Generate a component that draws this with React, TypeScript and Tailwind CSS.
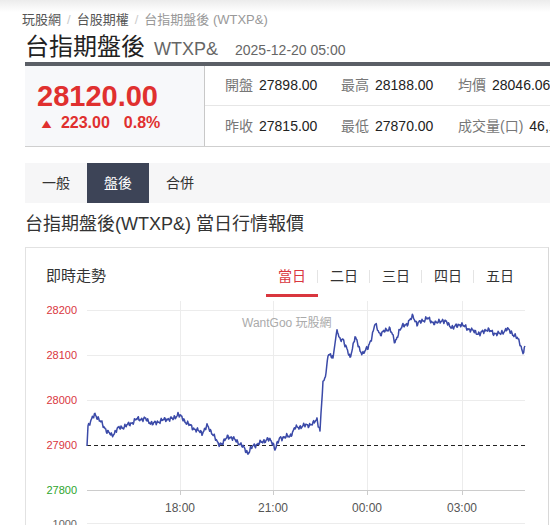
import React from "react";

const KEY: [number, number][] = [
  [87, 445], [88, 425], [91, 420], [95, 413], [100, 420], [107, 430], [112, 435], [117, 428],
  [123, 426], [130, 423], [137, 418], [145, 418], [153, 423], [160, 420], [167, 418], [173, 418],
  [178, 413], [187, 422], [193, 427], [202, 432], [207, 425], [213, 433], [218, 443], [223, 442],
  [228, 435], [237, 440], [243, 446], [248, 452], [253, 445], [260, 442], [268, 438], [273, 442],
  [275, 448], [280, 437], [290, 435], [295, 427], [303, 425], [313, 423], [317, 418], [320, 430],
  [321, 412], [323, 383], [326, 372], [328, 353], [333, 357], [337, 328], [340, 340], [343, 338],
  [347, 348], [350, 358], [355, 335], [360, 350], [363, 352], [368, 347], [372, 335], [375, 323],
  [380, 333], [385, 330], [390, 327], [395, 342], [399, 330], [403, 325], [408, 322], [413, 315],
  [417, 323], [422, 320], [427, 317], [432, 321], [437, 322], [442, 319], [447, 322], [453, 327],
  [460, 323], [467, 327], [473, 330], [480, 333], [487, 328], [493, 332], [500, 333], [507, 328],
  [512, 332], [517, 337], [520, 342], [523, 352], [525, 345],
];

function buildPath(): string {
  const pts: string[] = [];
  for (let i = 0; i < KEY.length - 1; i++) {
    const [x0, y0] = KEY[i];
    const [x1, y1] = KEY[i + 1];
    const steps = Math.max(1, Math.round((x1 - x0) * 1.5));
    for (let s = 0; s < steps; s++) {
      const t = s / steps;
      const x = x0 + (x1 - x0) * t;
      let y = y0 + (y1 - y0) * t;
      const steep = Math.abs(y1 - y0) / Math.max(1, x1 - x0) > 6;
      if (!steep && x > 88) {
        y += Math.sin(x * 1.9) * 1.3 + Math.sin(x * 3.3 + 1) * 1.0 + Math.sin(x * 0.71 + 2) * 0.9;
      }
      pts.push(`${x.toFixed(2)},${y.toFixed(2)}`);
    }
  }
  const last = KEY[KEY.length - 1];
  pts.push(`${last[0]},${last[1]}`);
  return "M" + pts.join(" L");
}

const FONT = { fontFamily: '"Liberation Sans", "Noto Sans CJK TC", Arial, sans-serif' };

export default function App() {
  const path = buildPath();
  const stats = [
    [["開盤", "27898.00"], ["最高", "28188.00"], ["均價", "28046.06"]],
    [["昨收", "27815.00"], ["最低", "27870.00"], ["成交量(口)", "46,128"]],
  ];
  const tabs = ["當日", "二日", "三日", "四日", "五日"];
  return (
    <div
      className="w-[550px] h-[525px] overflow-hidden bg-[linear-gradient(to_bottom,#ececec_0px,#ffffff_12px)] text-[#333]"
      style={FONT}
    >
      <div className="w-[700px] pl-[22px]">
        {/* breadcrumb */}
        <div className="h-[32px] pt-[7px] text-[13px] leading-[18px] flex items-center gap-[6px]">
          <span className="text-[#555]">玩股網</span>
          <span className="text-[#ccc]">/</span>
          <span className="text-[#555]">台股期權</span>
          <span className="text-[#ccc]">/</span>
          <span className="text-[#999]">台指期盤後 (WTXP&amp;)</span>
        </div>
        {/* title */}
        <div className="pl-[3px] h-[30px] flex items-end gap-[9px]">
          <span className="text-[24px] leading-[30px] text-[#222]">台指期盤後</span>
          <span className="text-[18px] leading-[26px] text-[#666]">WTXP&amp;</span>
          <span className="text-[14px] leading-[24px] text-[#666] ml-[8px]">2025-12-20 05:00</span>
        </div>
      </div>
      <div className="w-[700px] pl-[25px] mt-[0px]">
        <div className="mt-[0px] border-t-[4px] border-[#5b5f66] flex border-b border-b-[#cfcfcf]">
          <div className="w-[180px] h-[80px] bg-[#f7f8fa] border-r border-[#c8c8c8] pl-[12px] pt-[14px]">
            <div className="text-[29px] leading-[32px] font-bold text-[#e0302f]">28120.00</div>
            <div className="flex items-center text-[16px] leading-[20px] font-bold text-[#e0302f] mt-[1px]">
              <span className="text-[13px] leading-[13px] ml-[3px] mr-[8px] scale-x-125">▲</span>
              <span>223.00</span>
              <span className="ml-[14px]">0.8%</span>
            </div>
          </div>
          <div className="flex flex-col">
            {stats.map((row, ri) => (
              <div
                key={ri}
                className={`flex h-[40px] items-center ${ri === 0 ? "border-b border-[#e6e6e6]" : ""}`}
              >
                {row.map(([k, v], ci) => (
                  <div key={ci} className={`flex items-center gap-[6px] text-[14px] ${ci === 0 ? "w-[136px] pl-[20px]" : ci === 1 ? "w-[117px]" : "w-[200px]"}`}>
                    <span className="text-[#777]">{k}</span>
                    <span className="text-[#222]">{v}</span>
                  </div>
                ))}
              </div>
            ))}
          </div>
        </div>

        {/* tabs */}
        <div className="mt-[16px] h-[40px] bg-[#f6f6f7] flex text-[14px]">
          <div className="w-[62px] flex items-center justify-center text-[#333]">一般</div>
          <div className="w-[62px] flex items-center justify-center bg-[#3d4457] text-white">盤後</div>
          <div className="w-[62px] flex items-center justify-center text-[#333]">合併</div>
        </div>

        <div className="mt-[9px] text-[18px] leading-[24px] text-[#333]">台指期盤後(WTXP&amp;) 當日行情報價</div>

        {/* card */}
        <div className="mt-[11px] w-[524px] border border-[#e2e2e2] border-r-[#d8d8d8] h-[300px]">
          <div className="h-[50px] flex items-start">
            <div className="pl-[20px] pt-[18px] text-[15px] leading-[20px] text-[#333]">即時走勢</div>
            <div className="ml-auto mr-[22px] flex pt-[18px]">
              {tabs.map((t, i) => (
                <div key={t} className="relative w-[52px] h-[32px] flex justify-center">
                  <span className={`text-[14px] leading-[20px] ${i === 0 ? "text-[#d9363e]" : "text-[#333]"}`}>{t}</span>
                  {i < 4 && <span className="absolute right-0 top-[4px] w-px h-[13px] bg-[#e4e4e4]" />}
                  {i === 0 && <span className="absolute left-0 right-0 bottom-[1px] h-[3px] bg-[#d9363e]" />}
                </div>
              ))}
            </div>
          </div>
          <svg width="522" height="240" className="block">
            <g transform="translate(-26,-297)">
              {[309, 354, 399].map((y) => (
                <line key={y} x1={87} x2={525} y1={y + 0.5} y2={y + 0.5} stroke="#ececec" />
              ))}
              {[180, 273, 367, 462].map((x) => (
                <line key={x} x1={x + 0.5} x2={x + 0.5} y1={300} y2={494} stroke="#ececec" />
              ))}
              <line x1={87} x2={525} y1={489.5} y2={489.5} stroke="#cccccc" />
              {[180, 273, 367, 462].map((x) => (
                <line key={"t" + x} x1={x + 0.5} x2={x + 0.5} y1={489} y2={494} stroke="#cccccc" />
              ))}
              <line x1={87} x2={525} y1={522.5} y2={522.5} stroke="#ececec" />
              <line x1={87} x2={525} y1={444.5} y2={444.5} stroke="#222" strokeDasharray="4 3" />
              <text x={242} y={326} fontSize={12} fill="#aaaaaa" style={FONT}>WantGoo 玩股網</text>
              {[
                [309, "28200", "#d9363e"],
                [354, "28100", "#d9363e"],
                [399, "28000", "#d9363e"],
                [444, "27900", "#d9363e"],
                [489, "27800", "#2ea52e"],
              ].map(([y, t, c]) => (
                <text key={t as string} x={77} y={(y as number) + 4} fontSize={11} fill={c as string} textAnchor="end" style={FONT}>
                  {t}
                </text>
              ))}
              <text x={77} y={527} fontSize={11} fill="#666" textAnchor="end" style={FONT}>1000</text>
              {[
                [180, "18:00"],
                [273, "21:00"],
                [367, "00:00"],
                [462, "03:00"],
              ].map(([x, t]) => (
                <text key={t as string} x={x as number} y={511} fontSize={12} fill="#555" textAnchor="middle" style={FONT}>
                  {t}
                </text>
              ))}
              <path d={path} fill="none" stroke="#3b4aa8" strokeWidth={1.5} strokeLinejoin="round" />
            </g>
          </svg>
        </div>
      </div>
    </div>
  );
}
